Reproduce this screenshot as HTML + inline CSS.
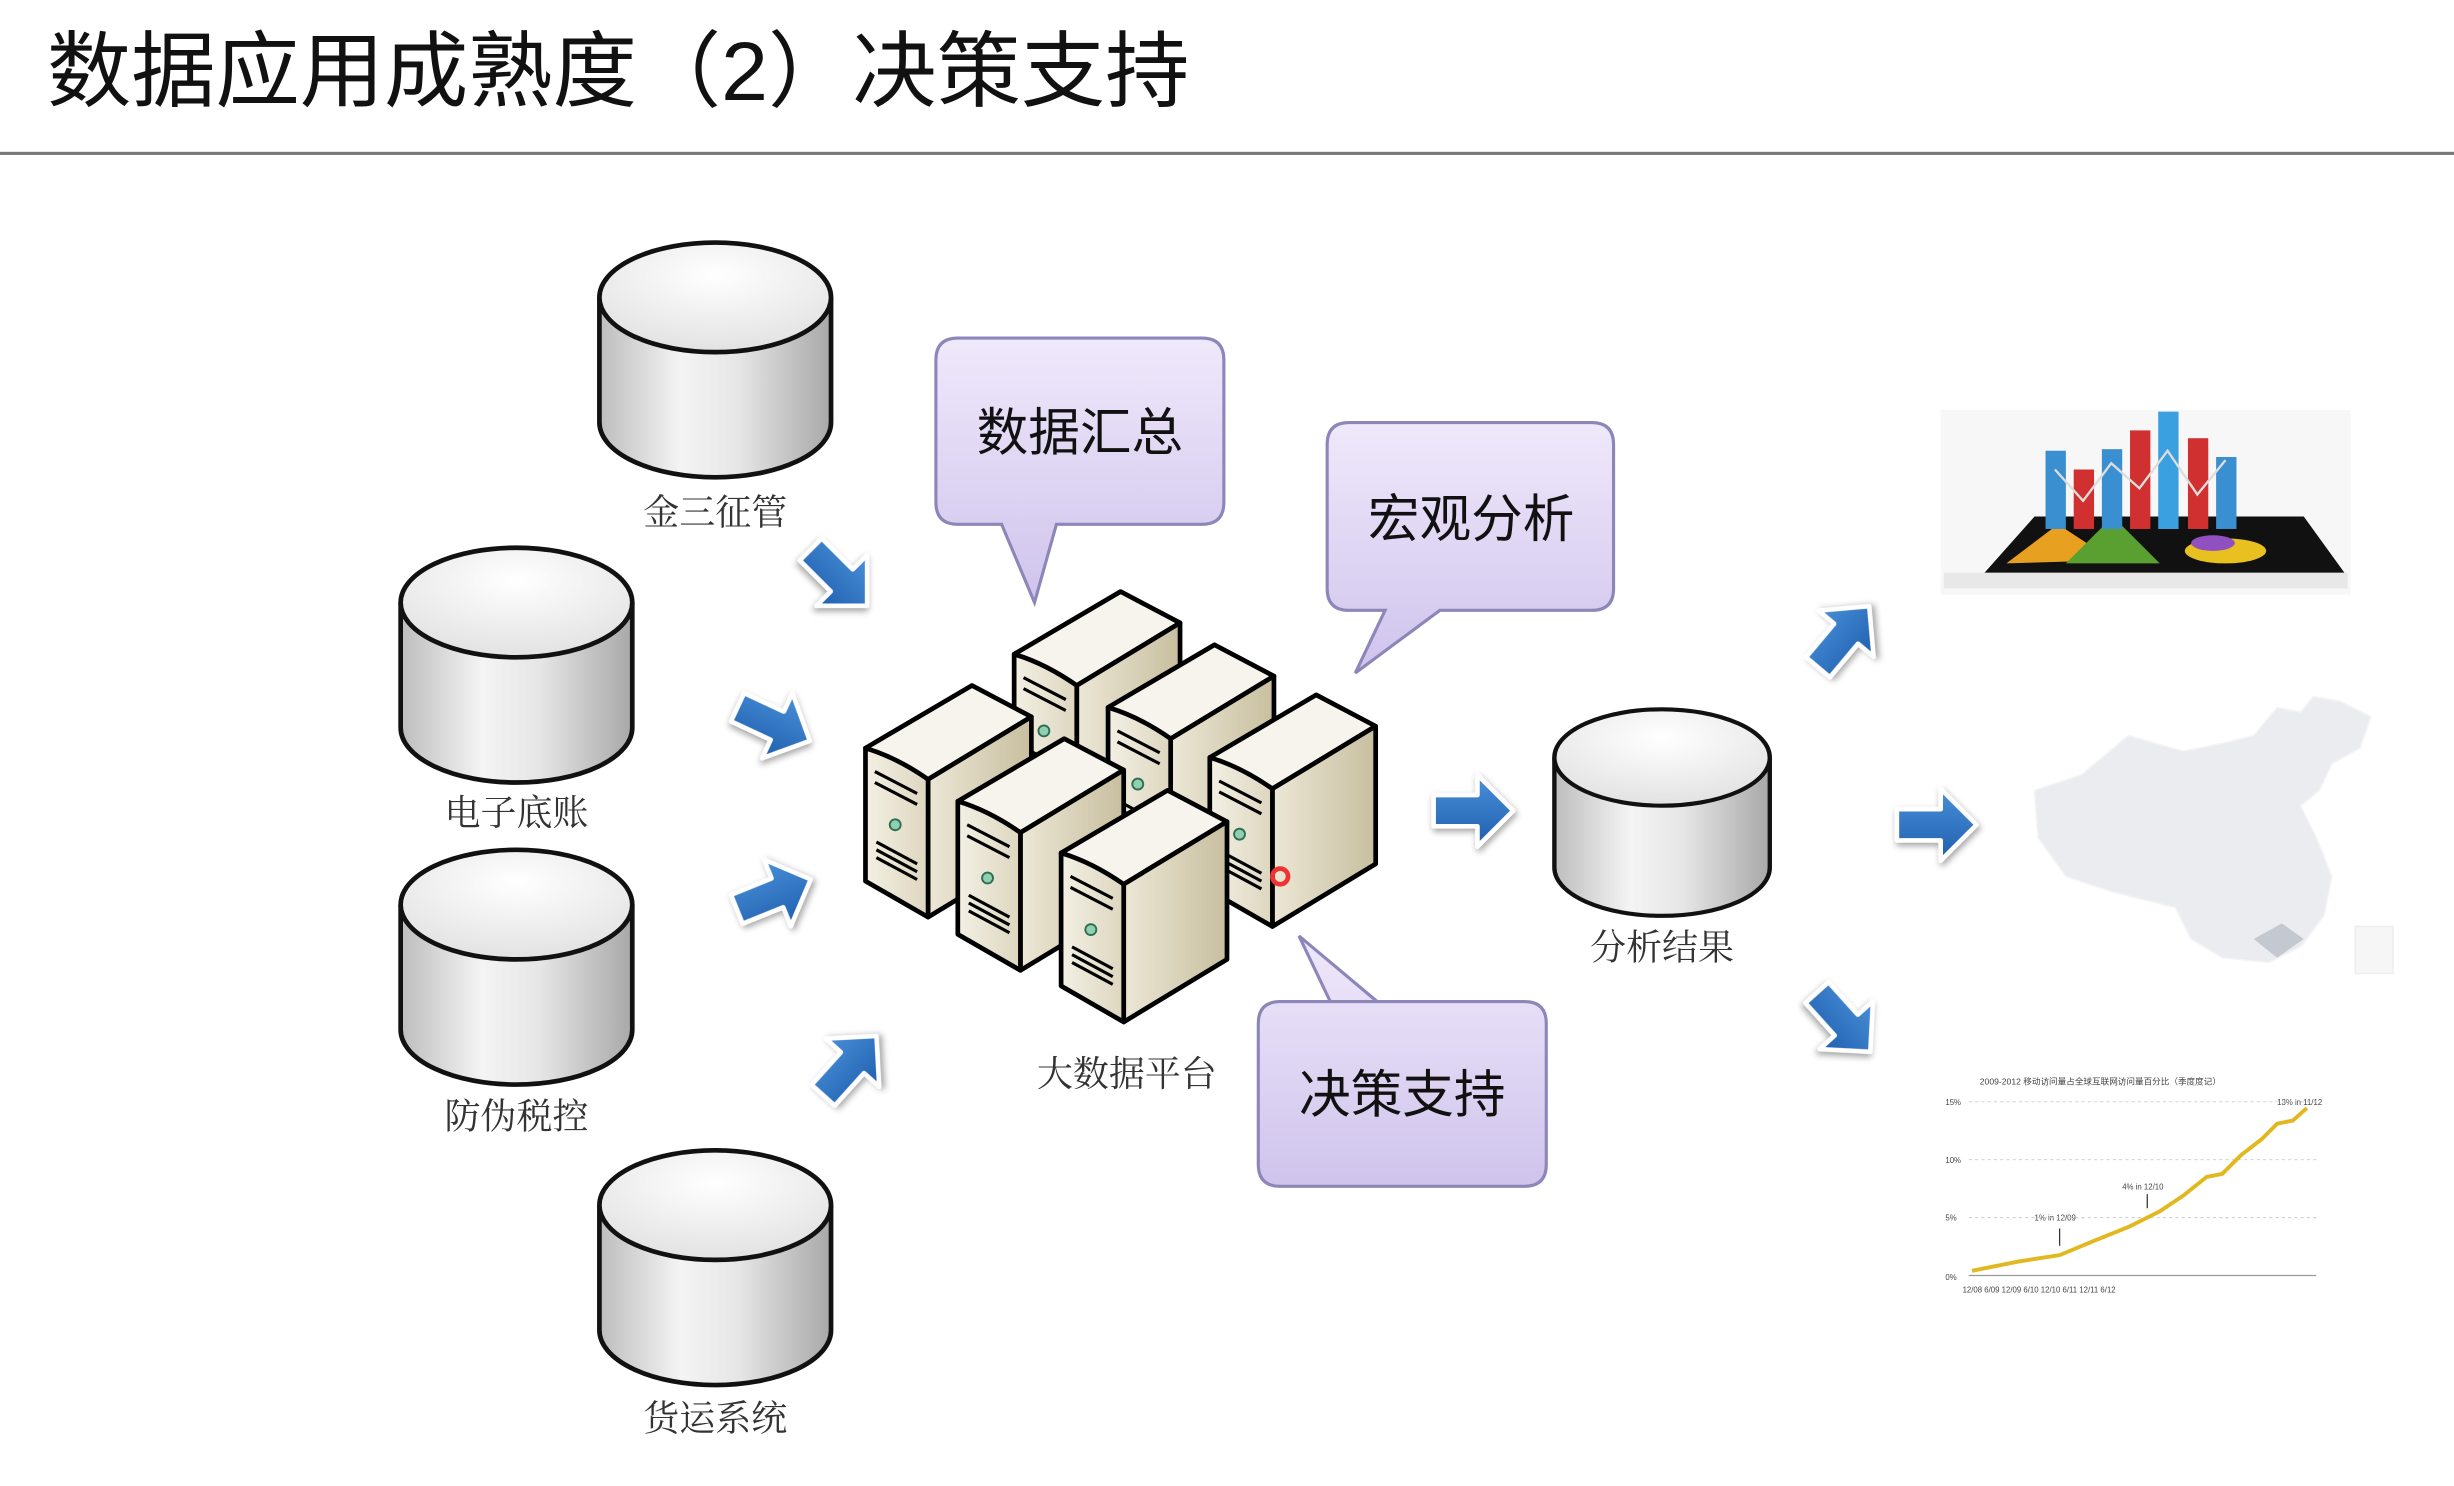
<!DOCTYPE html>
<html><head><meta charset="utf-8"><style>
html,body{margin:0;padding:0;background:#fff;width:2454px;height:1486px;overflow:hidden}
svg{display:block}
.lbl{font-family:"Liberation Serif","Noto Serif CJK SC",serif;font-size:23px;fill:#333;text-anchor:middle}
.co{font-family:"Liberation Sans","Noto Sans CJK SC",sans-serif;font-size:33px;fill:#111;text-anchor:middle}
</style></head><body>
<svg width="2454" height="1486" viewBox="0 0 1568 949.5" preserveAspectRatio="none" xmlns="http://www.w3.org/2000/svg">
<defs>
<linearGradient id="cyl" x1="0" x2="1" y1="0" y2="0">
<stop offset="0" stop-color="#bdbdbd"/><stop offset="0.35" stop-color="#f4f4f4"/><stop offset="0.6" stop-color="#e6e6e6"/><stop offset="1" stop-color="#a8a8a8"/></linearGradient>
<radialGradient id="cyt" cx="0.5" cy="0.3" r="0.7"><stop offset="0" stop-color="#fff"/><stop offset="1" stop-color="#e2e2e2"/></radialGradient>
<linearGradient id="pur" x1="0" x2="0" y1="0" y2="1"><stop offset="0" stop-color="#efe9fb"/><stop offset="1" stop-color="#cfc3ec"/></linearGradient>
<linearGradient id="blu" x1="0" x2="0" y1="0" y2="1"><stop offset="0" stop-color="#4a8fd8"/><stop offset="1" stop-color="#1e5fae"/></linearGradient>
<linearGradient id="sfr" x1="0" x2="1"><stop offset="0" stop-color="#f3f0e4"/><stop offset="1" stop-color="#ddd6bf"/></linearGradient>
<linearGradient id="ssd" x1="0" x2="1"><stop offset="0" stop-color="#ece7d6"/><stop offset="1" stop-color="#c8bf9f"/></linearGradient>
<g id="srv" stroke="#000" stroke-width="3" stroke-linejoin="round">
<polygon points="0,40 68,0 106,20 40,60" fill="#f6f4ec"/>
<polygon points="40,60 106,20 106,108 40,148" fill="url(#ssd)"/>
<path d="M0,40 Q20,46 40,60 L40,148 L0,125 Z" fill="url(#sfr)"/>
<g fill="none" stroke-width="2">
<path d="M6,55 L33,69 M6,62 L33,76 M7,100 L33,114 M7,105 L33,119 M7,110 L33,124"/>
</g>
<circle cx="19" cy="89" r="3.5" fill="#8fd0b0" stroke="#2f6c52" stroke-width="1.2"/>
</g>
<g id="cy">
<path d="M-74,0 L-74,80 A74,35 0 0 0 74,80 L74,0" fill="url(#cyl)" stroke="#111" stroke-width="3"/>
<ellipse cx="0" cy="0" rx="74" ry="35" fill="url(#cyt)" stroke="#111" stroke-width="3"/>
</g>
<g id="ar"><polygon points="-24,-10 4,-10 4,-23 27,0 4,23 4,10 -24,10" fill="url(#blu)" stroke="#fff" stroke-width="3" stroke-linejoin="round" style="filter:drop-shadow(1px 2px 2px rgba(0,0,0,.35))"/></g>
</defs>

<text x="30" y="64" font-family="'Liberation Sans','Noto Sans CJK SC',sans-serif" font-size="53" fill="#111" textLength="730" lengthAdjust="spacingAndGlyphs">数据应用成熟度（2）决策支持</text>
<rect x="0" y="97" width="1568" height="2" fill="#777"/>

<use href="#cy" x="457" y="190"/>
<use href="#cy" x="330" y="385"/>
<use href="#cy" x="330" y="578"/>
<use href="#cy" x="457" y="770"/>
<g transform="translate(1062,484) scale(0.93,0.88)"><use href="#cy"/></g>
<text class="lbl" x="457" y="335">金三征管</text>
<text class="lbl" x="330" y="527">电子底账</text>
<text class="lbl" x="330" y="721">防伪税控</text>
<text class="lbl" x="457" y="914">货运系统</text>
<text class="lbl" x="1062" y="613">分析结果</text>
<text class="lbl" x="720" y="694">大数据平台</text>

<g fill="url(#pur)" stroke="#8d86b8" stroke-width="2">
<path d="M612,216 H768 Q782,216 782,230 V321 Q782,335 768,335 H675 L661,385 L640,335 H612 Q598,335 598,321 V230 Q598,216 612,216 Z"/>
<path d="M862,270 H1017 Q1031,270 1031,284 V376 Q1031,390 1017,390 H920 L866,430 L885,390 H862 Q848,390 848,376 V284 Q848,270 862,270 Z"/>
<path d="M818,640 H880 L830,598 L850,640 H974 Q988,640 988,654 V744 Q988,758 974,758 H818 Q804,758 804,744 V654 Q804,640 818,640 Z"/>
</g>
<text class="co" x="690" y="288">数据汇总</text>
<text class="co" x="940" y="343">宏观分析</text>
<text class="co" x="896" y="711">决策支持</text>

<use href="#srv" x="648" y="378"/>
<use href="#srv" x="708" y="412"/>
<use href="#srv" x="773" y="444"/>
<use href="#srv" x="553" y="438"/>
<use href="#srv" x="612" y="472"/>
<use href="#srv" x="678" y="505"/>
<circle cx="818" cy="560" r="5" fill="none" stroke="#e33" stroke-width="3"/>

<use href="#ar" transform="translate(535,368) rotate(45)"/>
<use href="#ar" transform="translate(493,462) rotate(25)"/>
<use href="#ar" transform="translate(493,572) rotate(-22)"/>
<use href="#ar" transform="translate(542,682) rotate(-48)"/>
<use href="#ar" transform="translate(940,518)"/>
<use href="#ar" transform="translate(1177,408) rotate(-50)"/>
<use href="#ar" transform="translate(1236,527)"/>
<use href="#ar" transform="translate(1177,652) rotate(48)"/>

<!-- bar chart -->
<rect x="1240" y="262" width="262" height="118" fill="#f7f7f7"/>
<polygon points="1268,366 1300,330 1472,330 1498,366" fill="#111"/>
<rect x="1242" y="366" width="258" height="10" fill="#e8e8e8"/>
<polygon points="1282,360 1315,335 1350,358" fill="#e8a020"/>
<polygon points="1320,360 1350,330 1380,360" fill="#5aa030"/>
<rect x="1307" y="288" width="13" height="50" fill="#3a8fd0"/>
<rect x="1325" y="300" width="13" height="38" fill="#d03030"/>
<rect x="1343" y="287" width="13" height="51" fill="#3a8fd0"/>
<rect x="1361" y="275" width="13" height="63" fill="#d03030"/>
<rect x="1379" y="263" width="13" height="75" fill="#3aa0e0"/>
<rect x="1398" y="280" width="13" height="58" fill="#d03030"/>
<rect x="1416" y="292" width="13" height="46" fill="#3a8fd0"/>
<ellipse cx="1422" cy="352" rx="26" ry="8" fill="#e8c020"/>
<ellipse cx="1414" cy="347" rx="14" ry="5" fill="#9050c0"/>
<polyline points="1313,300 1331,320 1349,296 1367,312 1385,288 1404,316 1422,294" fill="none" stroke="#ddd" stroke-width="1.5"/>

<!-- map -->
<path d="M1300,505 L1330,495 L1360,470 L1395,480 L1420,475 L1440,470 L1455,452 L1470,455 L1478,445 L1495,448 L1515,458 L1508,478 L1490,488 L1482,505 L1470,515 L1480,535 L1490,560 L1485,585 L1470,605 L1450,615 L1420,612 L1400,600 L1390,580 L1350,570 L1320,560 L1302,535 Z" fill="#ebecf0" stroke="#f4f4f6"/>
<path d="M1440,600 L1458,590 L1472,600 L1455,612 Z" fill="#c4c8d0"/>
<rect x="1505" y="592" width="24" height="30" fill="#f6f6f6" stroke="#eee"/>

<!-- line chart -->
<g font-family="Liberation Sans,sans-serif" font-size="5" fill="#444">
<text x="1265" y="693" font-size="5.5">2009-2012 移动访问量占全球互联网访问量百分比（季度度记）</text>
<text x="1455" y="706">13% in 11/12</text>
<text x="1243" y="706">15%</text><text x="1243" y="743">10%</text><text x="1243" y="780">5%</text><text x="1243" y="818">0%</text>
<text x="1356" y="760">4% in 12/10</text><text x="1300" y="780">1% in 12/09</text>
<text x="1254" y="826">12/08  6/09   12/09   6/10   12/10   6/11   12/11   6/12</text>
</g>
<g stroke="#ccc" stroke-width="0.6" stroke-dasharray="2,2"><path d="M1258,704 H1480 M1258,741 H1480 M1258,778 H1480"/></g>
<path d="M1258,815 H1480" stroke="#999" stroke-width="0.8"/>
<path d="M1316,785 V796 M1372,763 V772" stroke="#333" stroke-width="0.8"/>
<polyline points="1260,812 1290,806 1316,802 1340,792 1360,784 1380,774 1395,764 1410,752 1420,750 1432,738 1445,728 1455,718 1465,716 1474,708" fill="none" stroke="#e2b820" stroke-width="2.5"/>
</svg>
</body></html>
